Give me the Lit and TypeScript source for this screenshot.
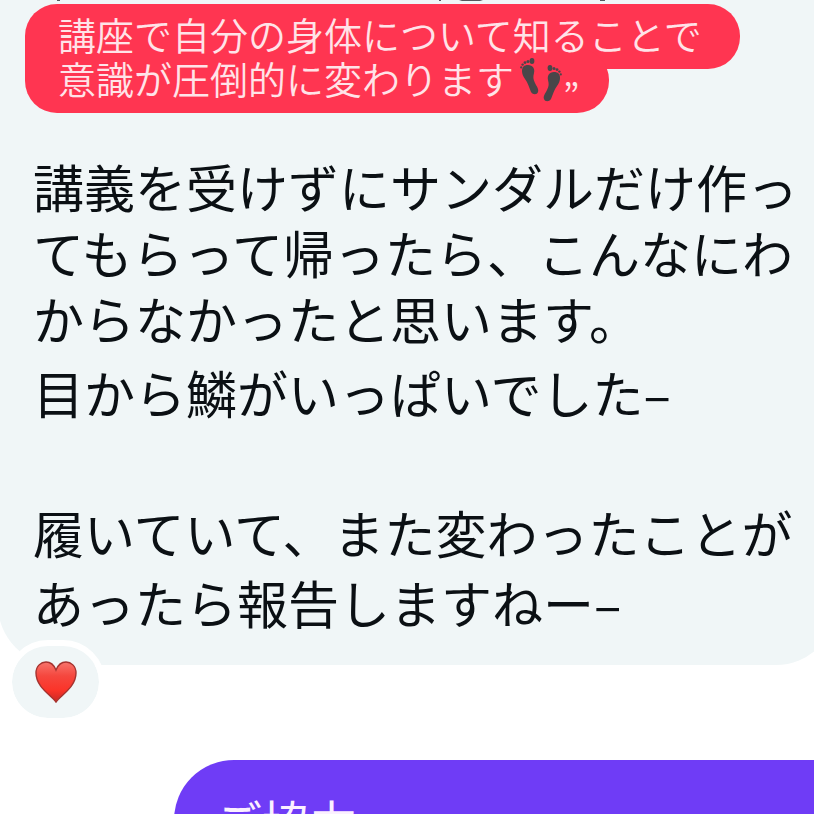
import { LitElement, html, css, svg } from "lit";
import { customElement } from "lit/decorators.js";

const foot = svg`
  <path d="M2 13C2 9 4 7 8 7C13 7 15 11 14 15C13 19 13 21 15 25C17 29 19 31 18 34C17 37 13 37 11 34C9 29 8 25 5 21C3 18 2 16 2 13Z"/>
  <ellipse cx="12" cy="3" rx="2.4" ry="3"/>
  <circle cx="8" cy="3.6" r="1.5"/><circle cx="5" cy="4.6" r="1.4"/>
  <circle cx="2.6" cy="6.6" r="1.2"/><circle cx="1.2" cy="9.4" r="1.1"/>`;

@customElement("app-root")
export class AppRoot extends LitElement {
  static styles = css`
    :host {
      display: block;
      height: 100vh;
      overflow: hidden;
      background: #fff;
      color: #0b1014;
      font-family: "Noto Sans CJK JP", sans-serif;
    }
    .received {
      margin: 0 -22px 0 -2px;
      padding: 0 0 28px 27px;
      background: #f0f6f7;
      border-radius: 0 0 60px 60px;
    }
    .previous {
      display: block;
      height: 4px;
      width: 100%;
    }
    .quote {
      display: flex;
      flex-direction: column;
      align-items: flex-start;
      isolation: isolate;
      margin: 0;
      padding: 8px 0 13px;
      color: #ffe3e8;
      font-size: 38px;
      font-weight: 350;
      line-height: 44px;
      white-space: nowrap;
    }
    .quote-line {
      position: relative;
      display: flex;
      height: 44px;
      padding: 0 38px 0 33px;
    }
    .quote-line::before {
      content: "";
      position: absolute;
      z-index: -1;
      inset: -8px 0 -13px;
      border-radius: 32px;
      background: #ff3551;
    }
    .quote-line.first::before {
      border-bottom-left-radius: 0;
    }
    .quote-line.last::before {
      border-top-left-radius: 0;
    }
    .quote-line.last {
      padding-right: 30px;
    }
    .feet {
      width: 44px;
      height: 46px;
      margin-left: 5px;
      fill: #494649;
    }
    .mark {
      padding-top: 20px;
      font-size: 36px;
      line-height: 36px;
    }
    .text {
      padding-left: 8px;
      padding-top: 40px;
      font-size: 51px;
      line-height: 66px;
      white-space: nowrap;
    }
    p {
      margin: 0;
    }
    .text p + p {
      margin-top: 8px;
    }
    .text p.closing {
      margin-top: 72px;
      line-height: 70px;
    }
    .reaction {
      position: relative;
      display: flex;
      align-items: center;
      justify-content: center;
      width: 87px;
      height: 72px;
      margin: -25px 0 36px 6px;
      padding: 0;
      box-sizing: content-box;
      border: 6px solid #fff;
      border-radius: 42px;
      background: #f0f6f7;
      background-clip: padding-box;
    }
    .heart {
      width: 44px;
      height: 44px;
    }
    .sent {
      margin-left: 174px;
      padding: 24px 40px;
      border-top-left-radius: 60px;
      background: #6f3cf6;
      color: #fbf0ff;
      font-size: 48px;
      line-height: 72px;
    }
  `;

  render() {
    return html`
      <article class="received">
        <svg class="previous" aria-hidden="true">
          <path d="M32 0h3v1h-3zM414 0h2v1h-2zM434 0h24l-3 1h-18zM575 0h5v1h-5z" fill="#55585e" />
        </svg>
        <blockquote class="quote">
          <span class="quote-line first">講座で自分の身体について知ることで</span>
          <span class="quote-line last"
            ><span>意識が圧倒的に変わります</span
            ><svg class="feet" viewBox="0 0 44 46" role="img" aria-label="足跡">
              <g transform="translate(1 2)">${foot}</g>
              <g transform="translate(43 9) scale(-1 1)">${foot}</g></svg
            ><span class="mark">”</span></span
          >
        </blockquote>
        <div class="text">
          <p>
            講義を受けずにサンダルだけ作っ<br />てもらって帰ったら、こんなにわ<br />からなかったと思います。
          </p>
          <p>目から鱗がいっぱいでした–</p>
          <p class="closing">
            履いていて、また変わったことが<br />あったら報告しますねー–
          </p>
        </div>
      </article>
      <button class="reaction" aria-label="ハート">
        <svg class="heart" viewBox="0 0 44 44">
          <defs>
            <linearGradient id="fill" x1="0" y1="0" x2="0" y2="1">
              <stop offset="0" stop-color="#f8746c" />
              <stop offset="0.35" stop-color="#f5473e" />
              <stop offset="0.7" stop-color="#fb3429" />
              <stop offset="1" stop-color="#c92824" />
            </linearGradient>
          </defs>
          <path
            d="M22 42C17 35 2 27 2 13C2 6 7 2 12 2C17 2 20 5 22 10C24 5 27 2 32 2C37 2 42 6 42 13C42 27 27 35 22 42Z"
            fill="url(#fill)"
            stroke="#a5332f"
            stroke-width="1.4"
          />
        </svg>
      </button>
      <article class="sent"><p>ご協力</p></article>
    `;
  }
}
